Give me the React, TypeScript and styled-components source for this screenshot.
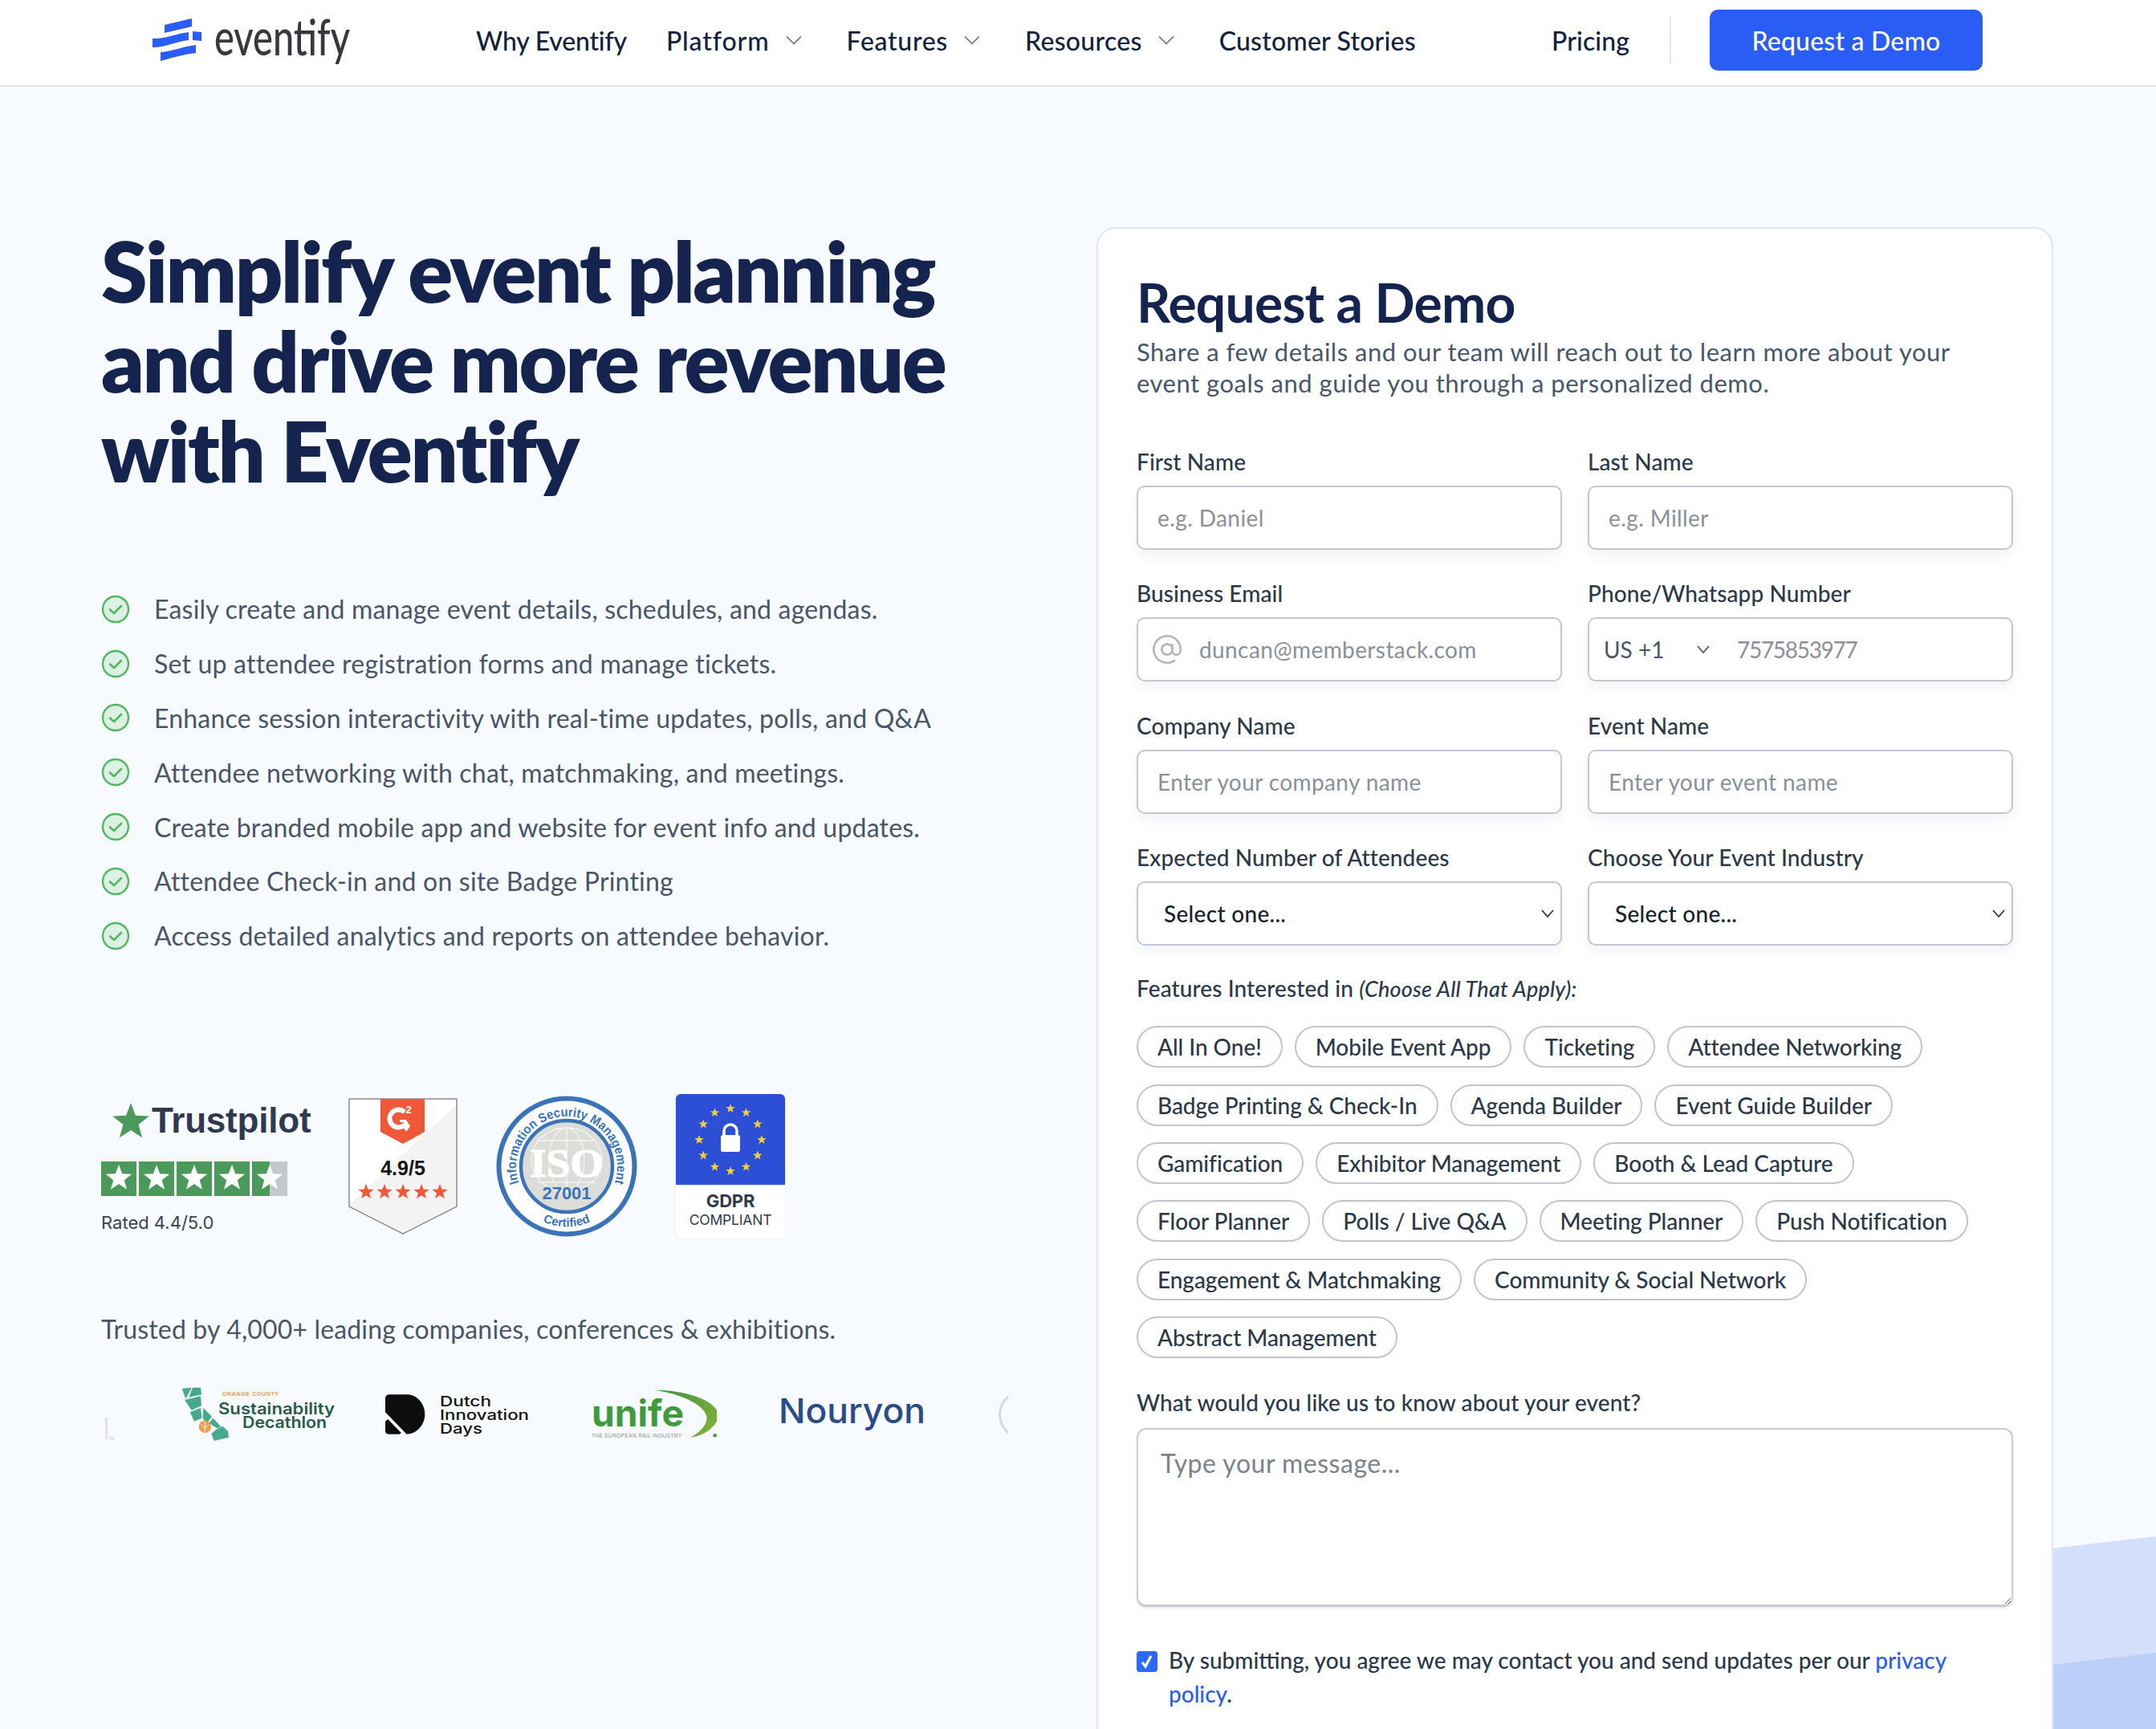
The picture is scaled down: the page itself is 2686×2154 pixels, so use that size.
import React from "react";
import styled, { createGlobalStyle } from "styled-components";

const Global = createGlobalStyle`
  html, body { margin: 0; padding: 0; height: 100%; overflow: hidden; background: #f7faff; }
  body { font-family: "Lato", "Noto Sans", sans-serif; color: #2d3748; }
  * { box-sizing: border-box; }
`;

const Page = styled.div`
  position: relative;
  width: 2686px;
  height: 2154px;
  overflow: hidden;
  background: #f7faff;
`;

const Decor = styled.svg`
  position: absolute;
  right: 0;
  bottom: 0;
  width: 129px;
  height: 240px;
`;

const Header = styled.header`
  position: relative;
  display: flex;
  align-items: center;
  height: 108px;
  padding: 0 216px 6px 188px;
  background: #fff;
  border-bottom: 2px solid #e2e5ea;
`;

const Brand = styled.div`
  display: flex;
  align-items: center;
  gap: 15px;
  flex: none;
  width: 252px;
  height: 60px;
  margin-right: 153px;
  svg { flex: none; }
`;

const BrandName = styled.span`
  font-size: 61px;
  font-weight: 500;
  line-height: 1;
  color: #36383e;
  transform: scaleX(0.77);
  transform-origin: left center;
  margin-top: -10px;
`;

const Nav = styled.nav`
  display: flex;
  align-items: center;
  gap: 49px;
`;

const NavItem = styled.a<{ $caret?: boolean; $track?: number }>`
  display: flex;
  align-items: center;
  gap: 20px;
  padding-right: ${(p) => (p.$caret ? "7px" : "0")};
  font-size: 32px;
  font-weight: 500;
  color: #14213d;
  letter-spacing: ${(p) => p.$track ?? 0.1}px;
  white-space: nowrap;
`;

const HeaderRight = styled.div`
  display: flex;
  align-items: center;
  margin-left: auto;
`;

const Divider = styled.span`
  width: 2px;
  height: 58px;
  margin: 0 48px 0 50px;
  background: #e2e5ea;
`;

const DemoButton = styled.button`
  width: 340px;
  height: 76px;
  border: 0;
  border-radius: 10px;
  background: #2a5cf6;
  color: #fff;
  font: 500 32px "Lato", sans-serif;
  letter-spacing: 0.2px;
`;

const Main = styled.main`
  position: relative;
  display: flex;
  justify-content: space-between;
  padding: 175px 128px 0 126px;
`;

const Left = styled.section`
  display: flex;
  flex-direction: column;
  width: 1136px;
`;

const Title = styled.h1`
  margin: -2px 0 0;
  font-size: 104px;
  line-height: 112px;
  font-weight: 800;
  color: #14244f;
  letter-spacing: -2.4px;
`;

const Checks = styled.ul`
  display: flex;
  flex-direction: column;
  margin: 108px 0 0;
  padding: 0;
  list-style: none;
`;

const CheckItem = styled.li`
  display: flex;
  align-items: center;
  gap: 30px;
  height: 67.8px;
  font-size: 32px;
  color: #4a5568;
  letter-spacing: 0.2px;
  white-space: nowrap;
`;

const Badges = styled.div`
  display: flex;
  align-items: flex-start;
  gap: 48px;
  height: 180px;
  margin-top: 163px;
`;

const Pilot = styled.div`
  display: flex;
  flex-direction: column;
  width: 260px;
  padding-top: 12px;
`;

const PilotName = styled.div`
  display: flex;
  align-items: center;
  gap: 3px;
  height: 42px;
  padding-left: 14px;
  font: 700 44px/42px "Liberation Sans", sans-serif;
  color: #2f3a52;
  letter-spacing: -0.2px;
  svg { flex: none; }
`;

const PilotRate = styled.div`
  margin-top: 20px;
  font: 400 22px/26px "Inter", sans-serif;
  color: #39425a;
`;

const BadgeShift = styled.div<{ $top: number }>`
  margin-top: ${(p) => p.$top}px;
  line-height: 0;
`;

const Gdpr = styled.div`
  display: flex;
  flex-direction: column;
  width: 136px;
  height: 180px;
  border-radius: 6px;
  overflow: hidden;
  background: #fff;
  box-shadow: 0 0 2px rgba(20, 30, 60, 0.14);
`;

const GdprFlag = styled.div`
  height: 113px;
  background: #2c4fd6;
  line-height: 0;
`;

const GdprText = styled.div`
  flex: 1;
  padding-top: 7px;
  text-align: center;
  font: 400 17.5px/22px "Inter", sans-serif;
  color: #323b4b;
  letter-spacing: -0.2px;
`;

const GdprStrong = styled.div`
  font-size: 22px;
  font-weight: 700;
  line-height: 26px;
`;

const Trusted = styled.p`
  margin: 93px 0 0;
  font-size: 32px;
  line-height: 40px;
  color: #4a5568;
  letter-spacing: 0.15px;
  white-space: nowrap;
`;

const LogoStrip = styled.div`
  display: flex;
  align-items: center;
  gap: 63px;
  height: 80px;
  margin-top: 46px;
  width: 1136px;
  overflow: hidden;
  svg { flex: none; }
`;

const Card = styled.section`
  flex: none;
  width: 1192px;
  height: 2000px;
  padding: 54px 48px 0;
  background: #fff;
  border: 2px solid #e3e6ec;
  border-radius: 24px;
`;

const CardTitle = styled.h2`
  margin: 0;
  font-size: 66px;
  line-height: 76px;
  font-weight: 700;
  color: #14244f;
  letter-spacing: -0.8px;
`;

const CardLead = styled.p`
  margin: 4px 0 0;
  font-size: 31px;
  line-height: 39px;
  color: #4a5568;
  letter-spacing: 0.5px;
`;

const Fields = styled.div`
  display: grid;
  grid-template-columns: 530px 530px;
  column-gap: 32px;
  row-gap: 34.4px;
  margin-top: 58px;
`;

const Field = styled.div`
  display: flex;
  flex-direction: column;
`;

const Label = styled.label`
  height: 40px;
  margin-bottom: 10px;
  font-size: 28px;
  line-height: 40px;
  font-weight: 500;
  color: #2d3748;
  letter-spacing: 0.1px;
  white-space: nowrap;
`;

const Shell = styled.div`
  position: relative;
  display: flex;
  align-items: center;
  height: 80px;
  background: #fff;
  border: 2.5px solid #c5c6d0;
  border-radius: 10px;
  box-shadow: 0 8px 14px rgba(20, 30, 60, 0.05);
`;

const TextInput = styled.input<{ $pad?: number; $tight?: boolean }>`
  flex: 1;
  min-width: 0;
  height: 100%;
  padding: 0 0 0 ${(p) => p.$pad ?? 24}px;
  border: 0;
  background: transparent;
  outline: 0;
  font: 400 28px "Lato", sans-serif;
  letter-spacing: ${(p) => (p.$tight ? "-1.3px" : "0.4px")};
  color: #2d3748;
  &::placeholder { color: #8b8f98; opacity: 1; }
`;

const AtIcon = styled.svg`
  flex: none;
  margin-left: 16px;
`;

const Country = styled.span`
  display: flex;
  align-items: center;
  flex: none;
  width: 165px;
  padding-left: 18px;
  justify-content: space-between;
  padding-right: 14px;
  font-size: 28px;
  color: #4a5568;
`;

const NativeSelect = styled.select`
  width: 100%;
  height: 100%;
  padding: 0 0 0 32px;
  border: 0;
  border-radius: 10px;
  outline: 0;
  appearance: none;
  background: transparent;
  font: 500 28px "Lato", sans-serif;
  letter-spacing: 0.3px;
  color: #1a202c;
`;

const SelectCaret = styled.svg`
  position: absolute;
  right: 8px;
  top: 28px;
  pointer-events: none;
`;

const FeatureTitle = styled.p`
  margin: 33px 0 0;
  font-size: 28px;
  line-height: 40px;
  font-weight: 500;
  color: #2d3748;
  letter-spacing: 0.1px;
  em { font-size: 27px; letter-spacing: 0.2px; }
`;

const Tags = styled.div`
  display: flex;
  flex-wrap: wrap;
  align-items: flex-start;
  gap: 20.4px 15px;
  margin-top: 26px;
`;

const Tag = styled.span`
  display: flex;
  align-items: center;
  height: 52px;
  padding: 0 24px;
  border: 2px solid #c2c5cc;
  border-radius: 26px;
  font-size: 28px;
  font-weight: 500;
  color: #2d3748;
  letter-spacing: -0.05px;
  white-space: nowrap;
`;

const MessageLabel = styled(Label)`
  display: block;
  margin: 35px 0 0;
`;

const Message = styled.textarea`
  display: block;
  width: 1092px;
  height: 223px;
  margin-top: 12px;
  padding: 22px 28px;
  background: #fff;
  border: 2px solid #c9ccd4;
  border-bottom-width: 3px;
  border-radius: 12px;
  outline: 0;
  box-shadow: 0 2px 3px rgba(20, 30, 60, 0.08);
  font: 400 32px "Lato", sans-serif;
  letter-spacing: 0.5px;
  &::placeholder { color: #7c818b; opacity: 1; }
`;

const Consent = styled.div`
  display: flex;
  align-items: flex-start;
  gap: 14px;
  margin-top: 45px;
  font-size: 28px;
  line-height: 42px;
  font-weight: 500;
  color: #2d3748;
  a { color: #2a5cf6; }
`;

const CheckBox = styled.span`
  display: flex;
  align-items: center;
  justify-content: center;
  flex: none;
  width: 26px;
  height: 26px;
  margin-top: 10px;
  border-radius: 4px;
  background: #2a6af6;
`;

const Caret = () => (
  <svg width="20" height="12" viewBox="0 0 20 12" fill="none" stroke="#7b8494" strokeWidth="1.8">
    <path d="M1 1.5 10 10.5 19 1.5" />
  </svg>
);

const TickCircle = () => (
  <svg width="36" height="36" viewBox="0 0 36 36" fill="none">
    <circle cx="18" cy="18" r="16" fill="#deefe3" stroke="#4fb960" strokeWidth="2.4" />
    <path d="M11 18.5 16 23 25 14" stroke="#4fb960" strokeWidth="2.6" strokeLinecap="round" strokeLinejoin="round" />
  </svg>
);

const LogoMark = () => (
  <svg width="64" height="56" viewBox="0 0 64 56" fill="#2a5cf6">
    <path d="M17 9 51 1V11L17 19Z" />
    <path d="M2 26C18 27 30 20 47 18V28C30 30 18 37 2 37Z" />
    <path d="M52 17 63 18V29L52 28Z" />
    <path d="M12 43C26 42 40 36 56 34V44C40 46 26 50 12 54Z" />
  </svg>
);

const starPts = (cx: number, cy: number, R: number) => {
  const pts: string[] = [];
  for (let i = 0; i < 10; i++) {
    const r = i % 2 ? R * 0.42 : R;
    const a = -Math.PI / 2 + (i * Math.PI) / 5;
    pts.push(`${(cx + r * Math.cos(a)).toFixed(1)},${(cy + r * Math.sin(a)).toFixed(1)}`);
  }
  return pts.join(" ");
};

const PilotStar = () => (
  <svg width="46" height="44" viewBox="0 0 48 46">
    <polygon points={starPts(24, 25, 25)} fill="#4b9a5b" />
  </svg>
);

const PilotStars = () => (
  <svg width="232" height="43" viewBox="0 0 232 43">
    {[0, 47, 94, 141].map((x) => (
      <g key={x}>
        <rect x={x} width="44" height="43" fill="#4b9a5b" />
        <polygon points={starPts(x + 22, 21, 17)} fill="#fff" />
      </g>
    ))}
    <rect x="188" width="44" height="43" fill="#c4c7cb" />
    <rect x="188" width="22" height="43" fill="#4b9a5b" />
    <polygon points={starPts(210, 21, 17)} fill="#fff" />
  </svg>
);

const G2Badge = () => (
  <svg width="136" height="170" viewBox="0 0 136 170">
    <path d="M1 1H135V135L68 169 1 135Z" fill="#fff" stroke="#8c8c8c" strokeWidth="1.5" strokeLinejoin="round" />
    <path d="M134 9V134.5L68 168 2 134.5V132Z" fill="#f3f3f3" />
    <path d="M40 1H95V42L68 57 40 42Z" fill="#f0583a" />
    <path d="M70 17.5A11 11 0 1 0 70.5 33" fill="none" stroke="#fff" strokeWidth="6" />
    <path d="M64 27H72L77 35 72 42 69 37 71 34 68 30H64Z" fill="#fff" />
    <text x="75" y="19" textAnchor="middle" fontFamily="Liberation Sans" fontWeight="700" fontSize="13" fill="#fff">2</text>
    <text x="68" y="96" textAnchor="middle" fontFamily="Liberation Sans" fontWeight="700" fontSize="25" fill="#161616">4.9/5</text>
    {[22, 45, 68, 91, 114].map((x) => (
      <polygon key={x} points={starPts(x, 117, 10)} fill="#f0583a" />
    ))}
  </svg>
);

const IsoBadge = () => (
  <svg width="176" height="176" viewBox="0 0 176 176">
    <defs>
      <path id="isoTop" d="M28 108A63 63 0 1 1 148 108" />
      <path id="isoBot" d="M50 153A76 76 0 0 0 126 153" />
    </defs>
    <circle cx="88" cy="88" r="84.5" fill="#fff" stroke="#3a73b8" strokeWidth="6" />
    <circle cx="88" cy="88" r="57" fill="#dcdcd8" stroke="#3a73b8" strokeWidth="4.5" />
    <g fill="none" stroke="#f4f4f2" strokeWidth="1.3">
      <ellipse cx="88" cy="80" rx="44" ry="40" />
      <ellipse cx="88" cy="80" rx="22" ry="40" />
      <path d="M88 40V120M52 56H124M52 108H124" />
    </g>
    <text x="88" y="101" textAnchor="middle" fontFamily="Liberation Serif" fontWeight="700" fontSize="50" fill="#fff" stroke="#fff" strokeWidth="1.2" textLength="92" lengthAdjust="spacingAndGlyphs">ISO</text>
    <text x="88" y="129" textAnchor="middle" fontFamily="Liberation Sans" fontWeight="700" fontSize="22" fill="#3a73b8">27001</text>
    <text fontFamily="Liberation Sans" fontWeight="700" fontSize="16" fill="#3a73b8">
      <textPath href="#isoTop" startOffset="50%" textAnchor="middle" textLength="238" lengthAdjust="spacingAndGlyphs">Information Security Management</textPath>
    </text>
    <text fontFamily="Liberation Sans" fontWeight="700" fontSize="15" fill="#3a73b8">
      <textPath href="#isoBot" startOffset="50%" textAnchor="middle">Certified</textPath>
    </text>
  </svg>
);

const EuFlag = () => {
  const pts = Array.from({ length: 12 }, (_, i) => {
    const a = (i * Math.PI) / 6;
    return [68 + 39 * Math.sin(a), 57 - 39 * Math.cos(a)];
  });
  return (
    <svg width="136" height="113" viewBox="0 0 136 113">
      {pts.map(([x, y], i) => (
        <polygon key={i} points={starPts(x, y, 6)} fill="#f3cf3c" />
      ))}
      <path d="M60 52V46a8 8 0 0 1 16 0V52" fill="none" stroke="#fff" strokeWidth="3.5" />
      <rect x="56" y="51" width="24" height="21" rx="2.5" fill="#fff" />
    </svg>
  );
};

const EdgeLogo = () => (
  <svg width="37" height="80" viewBox="0 0 37 80">
    <rect x="5" y="44" width="3" height="27" fill="#e0e2e8" />
    <text x="9" y="72" fontSize="5" fontFamily="Liberation Sans" fill="#c9ccd4">TM</text>
  </svg>
);

const DecathlonLogo = () => (
  <svg width="191" height="80" viewBox="0 0 191 80">
    <g transform="translate(-6,-2) scale(0.3333)">
      <g fill="#46a98a">
        <path d="M20 30 56 26 34 68Z" />
        <path d="M60 26H90L93 52 46 62Z" />
        <path d="M30 72 90 58 93 94 56 110Z" />
        <path d="M50 118 90 102 94 140 66 152Z" />
        <path d="M100 102 132 134 112 160 98 140Z" />
        <path d="M136 140 166 172 150 178 122 158Z" />
        <path d="M130 198 152 180 172 170 192 190 195 212 140 225Z" />
      </g>
      <circle cx="106" cy="172" r="23" fill="#ee9d4c" />
      <path d="M106 152V192M92 165 106 178 120 165" stroke="#f7faff" strokeWidth="3" fill="none" />
    </g>
    <text x="51" y="17" fontSize="7" fontWeight="700" fontFamily="Liberation Sans" fill="#ee9d4c" textLength="70">ORANGE COUNTY</text>
    <text x="46" y="40" fontSize="20" fontWeight="600" fontFamily="Inter" fill="#2a5a49" textLength="145" lengthAdjust="spacingAndGlyphs">Sustainability</text>
    <text x="76" y="57" fontSize="20" fontWeight="600" fontFamily="Inter" fill="#2a5a49" textLength="105" lengthAdjust="spacingAndGlyphs">Decathlon</text>
  </svg>
);

const DutchLogo = () => (
  <svg width="180" height="80" viewBox="0 0 180 80">
    <g transform="translate(-260,-2) scale(0.3333)" fill="#0e0e0e">
      <path d="M780 68Q780 52 796 52H860C900 52 928 88 928 126 928 166 896 200 860 200L780 118Z" />
      <path d="M780 152 790 144 840 196 832 200H794Q780 200 780 186Z" />
    </g>
    <g fontFamily="Inter" fontWeight="500" fontSize="17" fill="#111">
      <text x="68" y="30" textLength="64" lengthAdjust="spacingAndGlyphs">Dutch</text>
      <text x="68" y="47" textLength="111" lengthAdjust="spacingAndGlyphs">Innovation</text>
      <text x="68" y="64" textLength="53" lengthAdjust="spacingAndGlyphs">Days</text>
    </g>
  </svg>
);

const UnifeLogo = () => (
  <svg width="170" height="80" viewBox="0 0 170 80">
    <defs>
      <linearGradient id="unifeArc" x1="0" y1="0" x2="1" y2="0.6">
        <stop offset="0" stopColor="#3a9440" />
        <stop offset="1" stopColor="#7cae3a" />
      </linearGradient>
    </defs>
    <g transform="translate(2,-2) scale(0.3333)">
      <path d="M270 35C400 35 510 80 510 130 510 170 450 210 405 212 450 190 480 150 460 120 440 80 350 45 270 35Z" fill="url(#unifeArc)" />
      <circle cx="497" cy="205" r="7" fill="#4d9a3c" />
    </g>
    <text x="14" y="55" fontSize="46" fontWeight="700" fontFamily="Inter" fill="#3f9a3c" textLength="115" lengthAdjust="spacingAndGlyphs">unife</text>
    <text x="14" y="69" fontSize="6.5" fontFamily="Liberation Sans" fill="#8a8f8a" textLength="112">THE EUROPEAN RAIL INDUSTRY</text>
  </svg>
);

const NouryonLogo = () => (
  <svg width="197" height="80" viewBox="0 0 197 80">
    <text x="14" y="51" fontSize="43" fontWeight="500" fontFamily="Inter" fill="#2b4c86" textLength="183" lengthAdjust="spacingAndGlyphs">Nouryon</text>
  </svg>
);

const ArcLogo = () => (
  <svg width="46" height="80" viewBox="0 0 46 80" fill="none">
    <path d="M40 18C26 30 26 50 40 63" stroke="#d5d8dc" strokeWidth="3" />
  </svg>
);

const bullets = [
  "Easily create and manage event details, schedules, and agendas.",
  "Set up attendee registration forms and manage tickets.",
  "Enhance session interactivity with real-time updates, polls, and Q&A",
  "Attendee networking with chat, matchmaking, and meetings.",
  "Create branded mobile app and website for event info and updates.",
  "Attendee Check-in and on site Badge Printing",
  "Access detailed analytics and reports on attendee behavior.",
];

const features = [
  "All In One!",
  "Mobile Event App",
  "Ticketing",
  "Attendee Networking",
  "Badge Printing & Check-In",
  "Agenda Builder",
  "Event Guide Builder",
  "Gamification",
  "Exhibitor Management",
  "Booth & Lead Capture",
  "Floor Planner",
  "Polls / Live Q&A",
  "Meeting Planner",
  "Push Notification",
  "Engagement & Matchmaking",
  "Community & Social Network",
  "Abstract Management",
];

const SelectField = ({ label }: { label: string }) => (
  <Field>
    <Label>{label}</Label>
    <Shell>
      <NativeSelect defaultValue="one">
        <option value="one">Select one...</option>
      </NativeSelect>
      <SelectCaret width="16" height="20" viewBox="0 0 16 20" fill="none" stroke="#333" strokeWidth="1.8">
        <path d="M1 6 8 14 15 6" />
      </SelectCaret>
    </Shell>
  </Field>
);

const TextField = ({ label, placeholder }: { label: string; placeholder: string }) => (
  <Field>
    <Label>{label}</Label>
    <Shell>
      <TextInput placeholder={placeholder} />
    </Shell>
  </Field>
);

export default function App() {
  return (
    <Page>
      <Global />
      <Decor viewBox="0 0 129 240">
        <path d="M0 15 129 0V240H0Z" fill="#d3dffb" />
        <path d="M0 160 129 145V240H0Z" fill="#bbcff8" />
      </Decor>
      <Header>
        <Brand>
          <LogoMark />
          <BrandName>eventify</BrandName>
        </Brand>
        <Nav>
          <NavItem $track={-0.2}>Why Eventify</NavItem>
          <NavItem $caret $track={0.9}>Platform<Caret /></NavItem>
          <NavItem $caret $track={0.7}>Features<Caret /></NavItem>
          <NavItem $caret $track={0.3}>Resources<Caret /></NavItem>
          <NavItem $track={0.2}>Customer Stories</NavItem>
        </Nav>
        <HeaderRight>
          <NavItem>Pricing</NavItem>
          <Divider />
          <DemoButton>Request a Demo</DemoButton>
        </HeaderRight>
      </Header>
      <Main>
        <Left>
          <Title>
            Simplify event planning
            <br />
            and drive more revenue
            <br />
            with Eventify
          </Title>
          <Checks>
            {bullets.map((b) => (
              <CheckItem key={b}>
                <TickCircle />
                {b}
              </CheckItem>
            ))}
          </Checks>
          <Badges>
            <Pilot>
              <PilotName>
                <PilotStar />
                Trustpilot
              </PilotName>
              <BadgeShift $top={30}>
                <PilotStars />
              </BadgeShift>
              <PilotRate>Rated 4.4/5.0</PilotRate>
            </Pilot>
            <BadgeShift $top={5}>
              <G2Badge />
            </BadgeShift>
            <BadgeShift $top={2}>
              <IsoBadge />
            </BadgeShift>
            <Gdpr>
              <GdprFlag>
                <EuFlag />
              </GdprFlag>
              <GdprText>
                <GdprStrong>GDPR</GdprStrong>
                COMPLIANT
              </GdprText>
            </Gdpr>
          </Badges>
          <Trusted>Trusted by 4,000+ leading companies, conferences &amp; exhibitions.</Trusted>
          <LogoStrip>
            <EdgeLogo />
            <DecathlonLogo />
            <DutchLogo />
            <UnifeLogo />
            <NouryonLogo />
            <ArcLogo />
          </LogoStrip>
        </Left>
        <Card>
          <CardTitle>Request a Demo</CardTitle>
          <CardLead>
            Share a few details and our team will reach out to learn more about your
            <br />
            event goals and guide you through a personalized demo.
          </CardLead>
          <Fields>
            <TextField label="First Name" placeholder="e.g. Daniel" />
            <TextField label="Last Name" placeholder="e.g. Miller" />
            <Field>
              <Label>Business Email</Label>
              <Shell>
                <AtIcon width="40" height="40" viewBox="0 0 24 24" fill="none" stroke="#b4b7be" strokeWidth="1.6">
                  <circle cx="12" cy="12" r="4" />
                  <path d="M16 8v5a3 3 0 0 0 6 0v-1a10 10 0 1 0-4 8" />
                </AtIcon>
                <TextInput $pad={20} placeholder="duncan@memberstack.com" />
              </Shell>
            </Field>
            <Field>
              <Label>Phone/Whatsapp Number</Label>
              <Shell>
                <Country>
                  US +1
                  <svg width="18" height="12" viewBox="0 0 18 12" fill="none" stroke="#4a5568" strokeWidth="1.8">
                    <path d="M2 2 9 10 16 2" />
                  </svg>
                </Country>
                <TextInput $pad={19} $tight placeholder="7575853977" />
              </Shell>
            </Field>
            <TextField label="Company Name" placeholder="Enter your company name" />
            <TextField label="Event Name" placeholder="Enter your event name" />
            <SelectField label="Expected Number of Attendees" />
            <SelectField label="Choose Your Event Industry" />
          </Fields>
          <FeatureTitle>
            Features Interested in <em>(Choose All That Apply):</em>
          </FeatureTitle>
          <Tags>
            {features.map((f) => (
              <Tag key={f}>{f}</Tag>
            ))}
          </Tags>
          <MessageLabel>What would you like us to know about your event?</MessageLabel>
          <Message placeholder="Type your message..." />
          <Consent>
            <CheckBox>
              <svg width="16" height="20" viewBox="0 0 16 20" fill="none" stroke="#fff" strokeWidth="3.2">
                <path d="M2 11 6 16 13 3" />
              </svg>
            </CheckBox>
            <span>
              By submitting, you agree we may contact you and send updates per our <a>privacy</a> <a>policy</a>.
            </span>
          </Consent>
        </Card>
      </Main>
    </Page>
  );
}
